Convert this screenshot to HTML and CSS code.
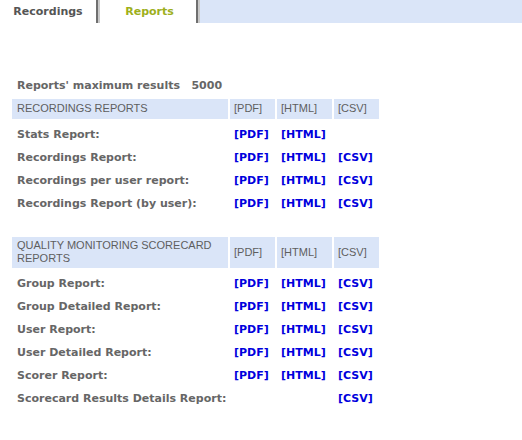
FILE: index.html
```html
<!DOCTYPE html>
<html>
<head>
<meta charset="utf-8">
<link rel="stylesheet" href="styles.css">
</head>
<body>
<div class="tabbar">
  <div class="tab">Recordings</div>
  <div class="tab active">Reports</div>
</div>
<table class="reports">
  <colgroup>
    <col class="c-label">
    <col class="c-pdf">
    <col class="c-html">
    <col class="c-csv">
  </colgroup>
  <tr class="row"><td class="label top" colspan="4">Reports' maximum results&nbsp;&nbsp; 5000</td></tr>
  <tr class="hdr"><th class="first">RECORDINGS REPORTS</th><th>[PDF]</th><th>[HTML]</th><th>[CSV]</th></tr>
  <tr class="row"><td class="label">Stats Report:</td><td><a href="#">[PDF]</a></td><td><a href="#">[HTML]</a></td><td></td></tr>
  <tr class="row"><td class="label">Recordings Report:</td><td><a href="#">[PDF]</a></td><td><a href="#">[HTML]</a></td><td><a href="#">[CSV]</a></td></tr>
  <tr class="row"><td class="label">Recordings per user report:</td><td><a href="#">[PDF]</a></td><td><a href="#">[HTML]</a></td><td><a href="#">[CSV]</a></td></tr>
  <tr class="row"><td class="label">Recordings Report (by user):</td><td><a href="#">[PDF]</a></td><td><a href="#">[HTML]</a></td><td><a href="#">[CSV]</a></td></tr>
  <tr class="spacer"><td colspan="4"></td></tr>
  <tr class="hdr"><th class="first">QUALITY MONITORING SCORECARD REPORTS</th><th>[PDF]</th><th>[HTML]</th><th>[CSV]</th></tr>
  <tr class="row"><td class="label">Group Report:</td><td><a href="#">[PDF]</a></td><td><a href="#">[HTML]</a></td><td><a href="#">[CSV]</a></td></tr>
  <tr class="row"><td class="label">Group Detailed Report:</td><td><a href="#">[PDF]</a></td><td><a href="#">[HTML]</a></td><td><a href="#">[CSV]</a></td></tr>
  <tr class="row"><td class="label">User Report:</td><td><a href="#">[PDF]</a></td><td><a href="#">[HTML]</a></td><td><a href="#">[CSV]</a></td></tr>
  <tr class="row"><td class="label">User Detailed Report:</td><td><a href="#">[PDF]</a></td><td><a href="#">[HTML]</a></td><td><a href="#">[CSV]</a></td></tr>
  <tr class="row"><td class="label">Scorer Report:</td><td><a href="#">[PDF]</a></td><td><a href="#">[HTML]</a></td><td><a href="#">[CSV]</a></td></tr>
  <tr class="row"><td class="label">Scorecard Results Details Report:</td><td></td><td></td><td><a href="#">[CSV]</a></td></tr>
</table>
</body>
</html>
```
FILE: styles.css
```css
html, body {
  margin: 0;
  padding: 0;
  background: #ffffff;
}
body {
  font-family: "DejaVu Sans", Verdana, sans-serif;
  font-size: 11px;
  color: #666666;
}
.tabbar {
  display: flex;
  height: 23px;
  background: #dae5f8;
}
.tab {
  width: 96px;
  background: #ffffff;
  text-align: center;
  line-height: 23px;
  font-weight: bold;
  color: #555555;
  border-right: 2px solid #6f6f6f;
  box-shadow: 2px 0 0 #c9c9c9;
  margin-right: 2px;
}
.tab.active {
  color: #9daf1c;
  padding-left: 3px;
  width: 93px;
}
.reports {
  margin: 50px 0 0 10px;
  border-collapse: separate;
  border-spacing: 2px;
  table-layout: fixed;
  width: 371px;
}
.c-label { width: 216px; }
.c-pdf { width: 45px; }
.c-html { width: 55px; }
.c-csv { width: 45px; }
.reports th {
  background: #dae5f8;
  font-family: "Liberation Sans", Arial, sans-serif;
  font-size: 11px;
  font-weight: normal;
  color: #5e5e5e;
  text-align: left;
  vertical-align: middle;
  line-height: 13px;
  height: 15px;
  padding: 2px 4px 3px 4px;
}
.reports th.first {
  padding-left: 5px;
  padding-right: 5px;
}
.reports td {
  line-height: 13px;
  height: 13px;
  padding: 7px 4px 1px 4px;
  vertical-align: middle;
  white-space: nowrap;
  overflow: visible;
}
.reports td.label {
  font-weight: bold;
  color: #666666;
  padding-left: 5px;
}
.reports td.top {
  padding-top: 4px;
  padding-bottom: 5px;
}
.reports .spacer td {
  height: 22px;
  padding: 0;
}
.reports a {
  color: #0000dd;
  font-weight: bold;
  text-decoration: none;
}
```
